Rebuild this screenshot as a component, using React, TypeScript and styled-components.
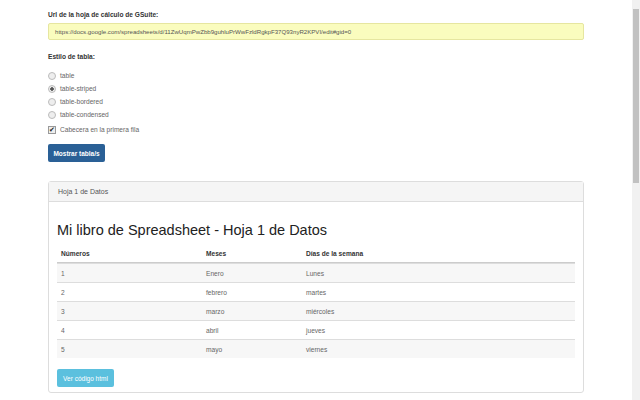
import React from "react";
import styled, { createGlobalStyle } from "styled-components";

const Global = createGlobalStyle`
  html, body { margin: 0; padding: 0; background: #fff; overflow: hidden; }
  body { font-family: "Liberation Sans", Arial, sans-serif; color: #333; font-size: 6.6px; }
`;

const Page = styled.div`
  width: 536px;
  padding: 10px 0 0 48px;
  display: flex;
  flex-direction: column;
`;
const Label = styled.div`
  font-weight: bold;
  font-size: 6.6px;
  line-height: 10px;
  margin-bottom: 3px;
`;
const UrlInput = styled.div`
  height: 17px;
  box-sizing: border-box;
  border: 1px solid #e6e6a0;
  background: #fafcbe;
  border-radius: 2px;
  padding: 0 6px;
  font-size: 6.1px;
  line-height: 15px;
  color: #555;
  white-space: nowrap;
  overflow: hidden;
  margin-bottom: 12px;
`;
const Options = styled.div`
  display: flex;
  flex-direction: column;
  margin-top: 4px;
`;
const Option = styled.div<{ $gap?: number }>`
  display: flex;
  align-items: center;
  gap: 4px;
  height: 13px;
  color: #666;
  margin-top: ${(p) => p.$gap ?? 0}px;
`;
const Radio = styled.span<{ $on?: boolean }>`
  width: 6px;
  height: 6px;
  border-radius: 50%;
  border: 1px solid #bbb;
  background: ${(p) => (p.$on ? "radial-gradient(#555 0 1.5px, #eee 2px)" : "#eee")};
`;
const Check = styled.span`
  width: 6px;
  height: 6px;
  border: 1px solid #999;
  background: #eee;
  font-size: 7px;
  line-height: 6px;
  text-align: center;
  color: #222;
`;
const PrimaryBtn = styled.div`
  margin-top: 8px;
  width: 57px;
  height: 18px;
  background: #2a6096;
  border-radius: 2px;
  color: #fff;
  font-size: 6.5px;
  font-weight: bold;
  display: flex;
  align-items: center;
  justify-content: center;
`;
const Panel = styled.div`
  margin-top: 19px;
  border: 1px solid #ddd;
  border-radius: 3px;
  height: 212px;
  box-sizing: border-box;
`;
const PanelHead = styled.div`
  height: 20px;
  background: #f5f5f5;
  border-bottom: 1px solid #ddd;
  box-sizing: border-box;
  padding-left: 9px;
  display: flex;
  align-items: center;
  color: #555;
  font-size: 7px;
`;
const PanelBody = styled.div`
  padding: 0 8px;
`;
const Title = styled.div`
  font-size: 14.5px;
  color: #222;
  margin: 19px 0 5px 0;
  line-height: 18px;
`;
const Table = styled.div`
  display: flex;
  flex-direction: column;
`;
const Row = styled.div<{ $striped?: boolean; $head?: boolean }>`
  display: grid;
  grid-template-columns: 145px 100px 1fr;
  height: 19px;
  align-items: center;
  padding-left: 4px;
  background: ${(p) => (p.$striped ? "#f7f7f7" : "#fff")};
  border-top: ${(p) => (p.$head ? "none" : "1px solid #ddd")};
  border-bottom: ${(p) => (p.$head ? "1px solid #ccc" : "none")};
  font-weight: ${(p) => (p.$head ? "bold" : "normal")};
  color: ${(p) => (p.$head ? "#333" : "#666")};
  box-sizing: border-box;
`;
const InfoBtn = styled.div`
  margin-top: 11px;
  width: 57px;
  height: 18px;
  background: #5bc0de;
  border-radius: 2px;
  color: #fff;
  font-size: 6.5px;
  display: flex;
  align-items: center;
  justify-content: center;
`;
const ScrollTrack = styled.div`
  position: fixed;
  top: 0;
  right: 0;
  width: 8px;
  height: 400px;
  background: #f1f1f1;
`;
const ScrollThumb = styled.div`
  position: absolute;
  top: 9px;
  left: 1px;
  width: 6px;
  height: 174px;
  background: #c1c1c1;
`;

const rows = [
  ["1", "Enero", "Lunes"],
  ["2", "febrero", "martes"],
  ["3", "marzo", "miércoles"],
  ["4", "abril", "jueves"],
  ["5", "mayo", "viernes"],
];

export default function App() {
  return (
    <>
      <Global />
      <Page>
        <Label>Url de la hoja de cálculo de GSuite:</Label>
        <UrlInput>https://docs.google.com/spreadsheets/d/11ZwUqmPwZbb9guhluPrWwFzldRgkpF37Q93nyR2KPVI/edit#gid=0</UrlInput>
        <Label>Estilo de tabla:</Label>
        <Options>
          <Option><Radio />table</Option>
          <Option><Radio $on />table-striped</Option>
          <Option><Radio />table-bordered</Option>
          <Option><Radio />table-condensed</Option>
          <Option $gap={2}><Check>✔</Check>Cabecera en la primera fila</Option>
        </Options>
        <PrimaryBtn>Mostrar tabla/s</PrimaryBtn>
        <Panel>
          <PanelHead>Hoja 1 de Datos</PanelHead>
          <PanelBody>
            <Title>Mi libro de Spreadsheet - Hoja 1 de Datos</Title>
            <Table>
              <Row $head><span>Números</span><span>Meses</span><span>Días de la semana</span></Row>
              {rows.map((r, i) => (
                <Row key={i} $striped={i % 2 === 0}>
                  <span>{r[0]}</span><span>{r[1]}</span><span>{r[2]}</span>
                </Row>
              ))}
            </Table>
            <InfoBtn>Ver código html</InfoBtn>
          </PanelBody>
        </Panel>
      </Page>
      <ScrollTrack><ScrollThumb /></ScrollTrack>
    </>
  );
}
